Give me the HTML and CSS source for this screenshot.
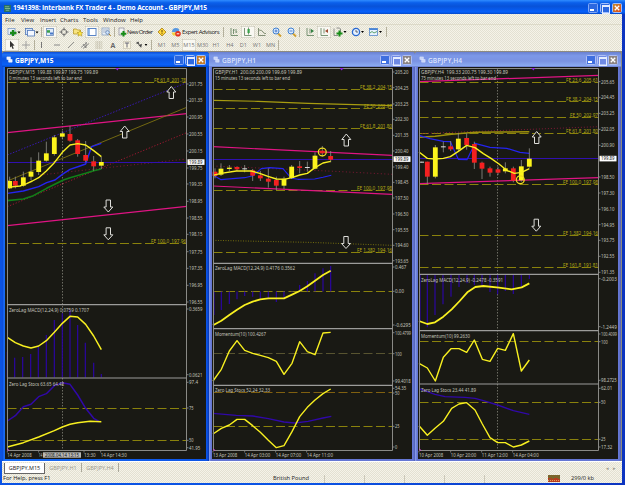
FILE: index.html
```html
<!DOCTYPE html>
<html lang="en">
<head>
<meta charset="utf-8">
<title>Interbank FX Trader 4</title>
<link rel="stylesheet" href="styles.css">
</head>
<body>
<div class="app">
  <header class="titlebar">
    <svg class="logo" viewBox="0 0 8 8"><rect width="8" height="8" fill="#286f62"/><path d="M1 2h5M1 4h6M2 6h4" stroke="#9ed0a0" stroke-width=".8"/></svg>
    <svg class="apptitle" viewBox="0 0 196 12"><text x="0" y="8.4" textLength="194">1941398: Interbank FX Trader 4 - Demo Account - GBPJPY,M15</text></svg>
    <div class="controls"><i class="min"></i><i class="max"></i><i class="close hot"><svg viewBox="0 0 9 9"><path d="M2 2l5 5M7 2l-5 5"/></svg></i></div>
  </header>
  <nav class="menu"><span>File</span><span>View</span><span>Insert</span><span>Charts</span><span>Tools</span><span>Window</span><span>Help</span></nav>
  <div class="bar bar1">
    <b class="w16"><svg viewBox="0 0 16 12"><rect x="2" y="2.5" width="7" height="6" fill="#e8f0fa" stroke="#7090c0" stroke-width=".7"/><path d="M7 4v6M4 7h6.5" stroke="#1c8a1c" stroke-width="2.3"/><path d="M11.5 5.5h3l-1.5 2z"/></svg></b>
    <b class="w18"><svg viewBox="0 0 18 12"><rect x="3.5" y="2.5" width="7" height="6" fill="#d4e4fa" stroke="#5078b8" stroke-width=".8"/><rect x="5.5" y="4.5" width="7" height="5.5" fill="#f4f8ff" stroke="#5078b8" stroke-width=".8"/><path d="M13.5 5.5h3l-1.5 2z"/></svg></b>
    <i class="sep"></i>
    <b class="on"><svg viewBox="0 0 14 12"><rect x="3.5" y="2.5" width="7" height="7" fill="#e0ecfa" stroke="#6888b8" stroke-width=".8"/><path d="M4 4.2h3v2.5H4z" fill="#38a048"/><path d="M7 6.5h3v2H7z" fill="#4878c8"/></svg></b>
    <b><svg viewBox="0 0 14 12"><circle cx="7" cy="6" r="2.7" fill="none" stroke="#666" stroke-width=".8"/><path d="M7 1.5v3M7 7.500v3M2.500 6h3M8.500 6h3" stroke="#666"/></svg></b>
    <b><svg viewBox="0 0 14 12"><path d="M2.500 3h3l1 1h3v4h-7z" fill="#f8e480" stroke="#b09020" stroke-width=".7"/><path d="M9 4.500l1 2h2l-1.600 1.400.6 2.300-2-1.300-2 1.300.6-2.300L6 6.500h2z" fill="#ffe840" stroke="#a88818" stroke-width=".5"/></svg></b>
    <b class="on"><svg viewBox="0 0 14 12"><rect x="3" y="2.500" width="8" height="7" fill="#fff" stroke="#4878c0" stroke-width=".9"/><path d="M4 3v6" stroke="#78a8e8" stroke-width="1.600"/></svg></b>
    <b><svg viewBox="0 0 14 12"><rect x="3" y="2" width="7" height="7" fill="#e8f0f8" stroke="#7c94b8" stroke-width=".7"/><path d="M4 4h5M4 6h3" stroke="#8c9cb4" stroke-width=".7"/><circle cx="8.500" cy="6.500" r="1.800" fill="#cfe4ff" stroke="#5878a8" stroke-width=".7"/><path d="M9.800 7.800l2 2" stroke="#b08020"/></svg></b>
    <i class="sep wide"></i>
    <b class="order"><svg viewBox="0 0 9 12"><rect x="1" y="2" width="5" height="7" fill="#f4f4f4" stroke="#889" stroke-width=".7"/><path d="M5.500 5v5.500M2.800 7.700h5.500" stroke="#168c16" stroke-width="2"/></svg><svg class="lbl" viewBox="0 0 27 12"><text x="0" y="8.200" textLength="26">New Order</text></svg></b>
    <b><svg viewBox="0 0 14 12"><path d="M7 2l4 4-4 4-4-4z" fill="#ffd83c" stroke="#a87c10" stroke-width=".8"/><path d="M7 4v2.500M7 7.200v1" stroke="#604000"/></svg></b>
    <b class="expert"><svg viewBox="0 0 13 12"><path d="M3 6q0-4 4-4t3 4z" fill="#5898e0"/><path d="M2.500 6.500h6L7 9.500H4z" fill="#f4d040"/><circle cx="9" cy="7.800" r="2.800" fill="#e03020"/><path d="M7.700 7.800h2.600" stroke="#fff"/></svg><svg class="lbl" viewBox="0 0 40 12"><text x="0" y="8.200" textLength="37.500">Expert Advisors</text></svg></b>
    <i class="sep wide"></i>
    <b><svg viewBox="0 0 14 12"><path d="M4 2v7.500h7M6.500 3v5M6.500 4h1.200M9 3v4M9 6h1.200" fill="none" stroke="#5c7c58" stroke-width=".8"/></svg></b>
    <b class="on"><svg viewBox="0 0 14 12"><path d="M3.500 2v7.500h7M7.500 1.500v7" fill="none" stroke="#5c7c58" stroke-width=".8"/><rect x="6.500" y="3" width="2.200" height="4" fill="#38a048"/></svg></b>
    <b><svg viewBox="0 0 14 12"><path d="M3.500 2v7.500h7M4 4q3 0 4 2t3 1.500" fill="none" stroke="#68785c" stroke-width=".8"/></svg></b>
    <b class="w15"><svg viewBox="0 0 15 12"><path d="M9 7.500l3 3" stroke="#d0a030" stroke-width="1.800"/><circle cx="7" cy="5" r="3" fill="#dcecff" stroke="#4080d0"/><path d="M5.500 5h3M7 3.500v3" stroke="#3068c0" stroke-width=".8"/></svg></b>
    <b><svg viewBox="0 0 14 12"><path d="M9 7.500l3 3" stroke="#d0a030" stroke-width="1.800"/><circle cx="7" cy="5" r="3" fill="#dcecff" stroke="#4080d0"/><path d="M5.500 5h3" stroke="#3068c0" stroke-width=".8"/></svg></b>
    <i class="sep wide"></i>
    <b><svg viewBox="0 0 14 12"><path d="M4 2v7.500h7M7 2.500v5" fill="none" stroke="#5c7c58" stroke-width=".8"/><path d="M8 3l3 2-3 2z" fill="#308040"/></svg></b>
    <b class="on"><svg viewBox="0 0 14 12"><path d="M4 2v7.500h7M7 2.500v5" fill="none" stroke="#5c7c58" stroke-width=".8"/><path d="M11 3v4L8 5z" fill="#a04830"/></svg></b>
    <b class="w18"><svg viewBox="0 0 18 12"><path d="M3 2.500v7h4M5.500 2h3l1 1v5" fill="none" stroke="#777" stroke-width=".8"/><path d="M8.500 4.500v6M5.500 7.500h6" stroke="#168c16" stroke-width="2"/><path d="M12.500 5h3L14 7z"/></svg></b>
    <b class="w18"><svg viewBox="0 0 18 12"><circle cx="7" cy="6" r="3.600" fill="#e4f0ff" stroke="#2868d0" stroke-width="1.300"/><path d="M7 4v2h2" fill="none" stroke="#333" stroke-width=".7"/><path d="M12 5h3l-1.500 2z"/></svg></b>
    <b class="w18"><svg viewBox="0 0 18 12"><rect x="2.500" y="2.500" width="8" height="7" fill="#e8f2ff" stroke="#5888c8" stroke-width=".8"/><path d="M2.500 3.200h8" stroke="#4080d8" stroke-width="1.500"/><path d="M3 7l2-1.500 2 1.500 3-1.500" fill="none" stroke="#389048" stroke-width=".8"/><path d="M12 5h3l-1.500 2z"/></svg></b>
    <i class="sep"></i>
  </div>
  <div class="bar bar2">
    <b class="on"><svg viewBox="0 0 14 12"><path d="M5 1.800l4.600 4.800-2 .1 1.200 2.800-1.200.5-1.200-2.800L5 8.500z" fill="#333"/></svg></b>
    <b><svg viewBox="0 0 14 12"><path d="M7 2v8M3 6h8" stroke="#999" stroke-width=".9"/></svg></b>
    <i class="sep"></i>
    <b><svg viewBox="0 0 14 12"><path d="M5.500 3v6" stroke="#777"/></svg></b>
    <b><svg viewBox="0 0 14 12"><path d="M4 6h6" stroke="#888"/></svg></b>
    <b><svg viewBox="0 0 14 12"><path d="M4 9l6-6" stroke="#888" stroke-width=".9"/></svg></b>
    <b><svg viewBox="0 0 14 12"><path d="M3 8.500l6-5M5 9.500l6-5M5 5l3 4M8 3v6" stroke="#777" stroke-width=".8"/></svg></b>
    <b><svg viewBox="0 0 14 12"><path d="M3.500 3h7M3.500 5h7M3.500 7h7M3.500 9h7" stroke="#a09880" stroke-width=".8" stroke-dasharray="1 .7"/></svg></b>
    <b class="glyph">A</b>
    <b><svg viewBox="0 0 14 12"><rect x="3.500" y="2.500" width="7" height="7" fill="#f8f4e0" stroke="#a09c88" stroke-width=".7" stroke-dasharray="1 1"/><path d="M4.800 4h4.400M7 4v4.500" stroke="#667"/></svg></b>
    <b class="w18"><svg viewBox="0 0 18 12"><path d="M2 4l3-2 1 3zM5 6l4-1-1 4z" fill="#444"/><path d="M3 3l5 5" stroke="#555"/><path d="M12 5h3l-1.500 2z"/></svg></b>
    <i class="sep wide"></i>
    <b class="tf">M1</b><b class="tf">M5</b><b class="tf on">M15</b><b class="tf">M30</b><b class="tf">H1</b><b class="tf">H4</b><b class="tf">D1</b><b class="tf">W1</b><b class="tf">MN</b>
    <i class="sep"></i>
  </div>
  <main class="mdi">
    <section class="win active">
      <div class="wintitle"><svg class="wicon" viewBox="0 0 8 8"><path d="M1 1h4v3H1zM3 4h4v3H3z" fill="#e8f0ff" stroke="#fff" stroke-width=".6"/></svg><svg class="wname" viewBox="0 0 60 12"><text x="0" y="8.600" textLength="38.500">GBPJPY,M15</text></svg><div class="controls"><i class="min"></i><i class="max"></i><i class="close"><svg viewBox="0 0 9 9"><path d="M2 2l5 5M7 2l-5 5"/></svg></i></div></div>
      <svg class="chart" id="m15" viewBox="5 67 201 392"></svg>
    </section>
    <section class="win">
      <div class="wintitle"><svg class="wicon" viewBox="0 0 8 8"><path d="M1 1h4v3H1zM3 4h4v3H3z" fill="#c8d4f8" stroke="#dfe6ff" stroke-width=".6"/></svg><svg class="wname" viewBox="0 0 60 12"><text x="0" y="8.600" textLength="34">GBPJPY,H1</text></svg><div class="controls"><i class="min"></i><i class="max"></i><i class="close"><svg viewBox="0 0 9 9"><path d="M2 2l5 5M7 2l-5 5"/></svg></i></div></div>
      <svg class="chart" id="h1" viewBox="212 67 200 392"></svg>
    </section>
    <section class="win">
      <div class="wintitle"><svg class="wicon" viewBox="0 0 8 8"><path d="M1 1h4v3H1zM3 4h4v3H3z" fill="#c8d4f8" stroke="#dfe6ff" stroke-width=".6"/></svg><svg class="wname" viewBox="0 0 60 12"><text x="0" y="8.600" textLength="34">GBPJPY,H4</text></svg><div class="controls"><i class="min"></i><i class="max"></i><i class="close"><svg viewBox="0 0 9 9"><path d="M2 2l5 5M7 2l-5 5"/></svg></i></div></div>
      <svg class="chart" id="h4" viewBox="418 67 200 392"></svg>
    </section>
  </main>
  <div class="tabs"><span class="tab current">GBPJPY,M15</span><span class="tab">GBPJPY,H1</span><span class="tab">GBPJPY,H4</span><span class="pager">◂&nbsp;&nbsp; ▸</span></div>
  <footer class="status"><span class="help">For Help, press F1</span><span class="profile">British Pound</span><i></i><i></i><i></i><i></i><i></i><span class="conn"><svg viewBox="0 0 12 7"><rect width="12" height="7" fill="#b83c20"/><path d="M1 0v3M3 0v3M5 0v4M7 0v3M9 0v3M11 0v4M2 4v2" stroke="#3c9038"/><path d="M0 5.500h12" stroke="#e89c60" stroke-dasharray="1 1"/></svg></span><span class="traffic">299/0 kb</span></footer>
</div>
<script src="charts.js"></script>
</body>
</html>
```
FILE: styles.css
```css
* { box-sizing: border-box; }
body {
  margin: 0;
  width: 625px;
  height: 485px;
  overflow: hidden;
  font-family: "Open Sans", "Noto Sans", sans-serif;
  font-size: 6px;
  color: #222;
  background: #0a3ccc;
}
svg { display: block; }
i { font-style: normal; }
b { font-weight: normal; }
.app {
  width: 625px;
  height: 485px;
  padding: 0 3px 2px 2px;
  display: flex;
  flex-direction: column;
  background: linear-gradient(90deg, #0b53e4, #0b53e4 50%, #0c34c0);
}
.titlebar {
  height: 14px;
  flex: none;
  margin: 0 -3px 0 -2px;
  padding: 2px 3px 0 4px;
  display: flex;
  align-items: center;
  background: linear-gradient(#2f8cff 0, #0a5fea 20%, #0852d8 45%, #0660fb 85%, #0448c8 100%);
}
.logo { width: 7px; height: 7px; margin-right: 2px; }
.apptitle { width: 196px; height: 12px; }
.apptitle text { font-weight: 700; font-size: 6.600px; fill: #fff; }
.controls { display: flex; gap: 2px; margin-left: auto; }
.controls i {
  width: 10px;
  height: 10px;
  border: 1px solid #a4c0fa;
  border-radius: 1.5px;
  background: #2c68e0;
}
.controls .min { border-color: #7fa8f8; }
.controls .min::after { content: ""; display: block; width: 4px; height: 2px; margin: 5px 0 0 1px; background: #fff; }
.controls .max::after { content: ""; display: block; width: 6px; height: 6px; margin: 1px; border: 1px solid #e4ecff; border-top-width: 2px; }
.controls .close { background: #c47c28; }
.controls .hot { background: linear-gradient(135deg, #c08a30, #e04a18); }
.controls .close svg { width: 8px; height: 8px; }
.controls .close path { stroke: #fff; stroke-width: 1.5; }

.menu, .bar, .tabs, .status {
  background-color: #eeebde;
  background-image: repeating-conic-gradient(#e3e1d2 0 25%, #f5f3e9 0 50%);
  background-size: 2px 2px;
}
.menu {
  height: 11px;
  flex: none;
  display: grid;
  grid-template-columns: 16px 19px 20px 23px 20px 27px 30px;
  padding-left: 3px;
  line-height: 12px;
  border-bottom: 1px solid #dcd9c8;
}
.bar { flex: none; display: flex; align-items: center; padding-left: 4px; }
.bar1 { height: 14px; }
.bar2 { height: 12px; padding-left: 3px; }
.bar b { width: 14px; height: 12px; flex: none; display: flex; align-items: center; justify-content: center; }
.bar b > svg { width: 100%; height: 12px; flex: none; }
.bar .w15 { width: 15px; }
.bar .w16 { width: 16px; }
.bar .w18 { width: 18px; }
.bar b.on { background: #f9f8f2; box-shadow: inset 0 0 0 .5px #bdb9a8; }
.bar b.order { width: 37px; justify-content: flex-start; }
.bar b.order > svg { width: 9px; }
.bar b.order > .lbl { width: 27px; }
.bar b.expert { width: 53px; justify-content: flex-start; }
.bar b.expert > svg { width: 13px; }
.bar b.expert > .lbl { width: 40px; }
.lbl text { font-size: 6px; fill: #222; }
.sep { width: 3px; height: 10px; flex: none; border-left: 1px solid #b4b09c; margin-left: 1px; margin-right: -1px; }
.sep.wide { width: 5px; }
.bar .glyph { font-size: 7px; font-weight: 700; color: #666; }
.bar .tf { width: 13.600px; font-size: 5.500px; color: #777; }
.bar2 .w18 { width: 16px; }

.mdi {
  height: 410px;
  flex: none;
  display: grid;
  grid-template-columns: 207px 206px 206px;
  background: #8d8b80;
  padding-top: 1px;
}
.win { background: linear-gradient(90deg, #8ea4ee, #6375d2 2px, #6577d4 calc(100% - 2px), #5260b4); padding: 0 3px; border-radius: 3px 3px 0 0; }
.win.active { background: linear-gradient(90deg, #0a45d4, #1a6cf4 2px, #0b54e6 calc(100% - 2px), #0834b0); }
.wintitle {
  height: 15px;
  margin: 0 -3px;
  padding: 0 3px 0 4px;
  display: flex;
  align-items: center;
  border-radius: 3px 3px 0 0;
  background: linear-gradient(#6a80d0, #7c98e8 25%, #7a92e2 60%, #8aa8f0 90%, #6878cc);
}
.win.active .wintitle { background: linear-gradient(#0a4cd8, #1f72f6 18%, #0a54e0 45%, #0960f8 85%, #0448c8); }
.wicon { width: 7px; height: 7px; margin-right: 2px; }
.wname { width: 60px; height: 12px; }
.wname text { font-size: 6.600px; font-weight: 600; fill: #dde6ff; }
.active .wname text { fill: #fff; font-weight: 700; }
.win .controls { gap: 1px; }
.win:not(.active) .controls i { background-color: #6f8ae4; border-color: #aebff6; }
.win:not(.active) .controls .min { background-color: #3f6fe0; }
.win:not(.active) .controls .close { background-color: #8b8484; }
.chart { width: 100%; height: 392px; background: #191914; }
.chart text { font-family: "Noto Sans", sans-serif; font-size: 5.200px; fill: #c4c4bc; }
.chart .head { font-size: 4.600px; }
.chart .fe { fill: #b5ab14; }
.chart .boxed { fill: #111; }

.tabs { height: 13px; flex: none; display: flex; padding: 1px 6px 1px 2px; border-top: 1px solid #fff; color: #9b998c; line-height: 10px; }
.tab { width: 37px; text-align: center; border-right: 1px solid #aaa89a; height: 9px; font-size: 5.500px; }
.tab.current { width: 41px; height: 11px; background: #fff; color: #222; border: 1px solid #666; border-top: 0; }
.pager { margin-left: auto; font-size: 5px; }
.status { height: 9px; flex: none; display: flex; align-items: center; line-height: 9px; padding-left: 1px; font-size: 5.700px; }
.help { width: 270px; }
.profile { width: 51px; }
.status i { width: 40px; height: 8px; flex: none; border-left: 1px solid #cbc8b8; }
.status i:last-of-type { width: 63px; }
.conn { width: 24px; padding-left: 1px; }
.conn svg { width: 12px; height: 7px; }
```
FILE: charts.js
```js
// Coordinates are stored in thirds of a pixel, relative to each block's origin.
const YELLOW = '#f8f020', BLUE = '#2424f0', INDIGO = '#3008a8', PINK = '#e01484', OLIVE = '#8a820c', RED = '#c01838';

function Chart(id, ox, left, right) {
  const svg = document.getElementById(id);
  const X = v => +(ox + v / 3).toFixed(2);
  const add = s => svg.insertAdjacentHTML('beforeend', s);
  const api = {
    line(color, oy, pts, w = 1, dash = '') {
      const p = pts.trim().split(/\s+/).map(q => { const [a, b] = q.split(',').map(Number); return X(a) + ',' + (oy + b / 3).toFixed(2); }).join(' ');
      add(`<polyline points="${p}" fill="none" stroke="${color}" stroke-width="${w}" stroke-dasharray="${dash}" stroke-linejoin="round"/>`);
    },
    level(y, color = OLIVE) { add(`<path d="M${left} ${Math.floor(y) + .5}H${right}" stroke="${color}" stroke-dasharray="9 3.500"/>`); },
    price(y) { add(`<path d="M${left} ${Math.floor(y) + .5}H${right}" stroke="#3010b0"/>`); },
    text(s, x, cy, w, cls = '') { add(`<text x="${x}" y="${(cy + 1.9).toFixed(2)}" textLength="${w}" lengthAdjust="spacingAndGlyphs" class="${cls}">${s}</text>`); },
    fe(y, s, w, color) { api.level(y, color); api.text(s, right - w - .5, y - 2.4, w, 'fe'); },
    scale(oy, list) { list.forEach(([v, y]) => { const cy = oy + y / 3; add(`<path d="M${right} ${cy.toFixed(1)}h2" stroke="#999" stroke-width=".8"/>`); api.text(v, right + 2.5, cy, Math.min(v.length * 2.25, 16)); }); },
    tag(y) { add(`<rect x="${right + 1}" y="${y - 2.7}" width="17" height="5.600" fill="#fff"/>`); api.text('199.89', right + 2.5, y, 13.5, 'boxed'); },
    bars(oy, base, list) { list.forEach(([x, y]) => { const a = oy + y / 3; add(`<path d="M${X(x)} ${base}V${a.toFixed(1)}" stroke="#2a06a0" stroke-width="1.200"/>`); }); },
    candles(oy, list) {
      list.forEach(([x, h, l, t, b, c]) => {
        const f = { y: '#fcf41c', r: '#f42020', w: '#ddd' }[c];
        add(`<path d="M${X(x)} ${oy + h / 3}V${oy + l / 3}" stroke="#92928a" stroke-width=".8"/><rect x="${X(x) - 2.4}" y="${oy + t / 3}" width="4.800" height="${(b - t) / 3}" fill="${f}"/>`);
      });
    },
    arrow(cx, y, up) {
      const d = up ? 'M0 0L4.500 5.500H2.200V12H-2.200V5.500H-4.500Z' : 'M0 12.500L4.500 7.500H2.200V.5H-2.200V7.500H-4.500Z';
      add(`<path transform="translate(${cx} ${y})" d="${d}" fill="#191914" stroke="#dededa"/>`);
    },
    ring(cx, cy) { add(`<circle cx="${cx}" cy="${cy}" r="3.900" fill="none" stroke="#f0dc20" stroke-width="1.300"/>`); },
    cursor(x) { add(`<path d="M${x} 69V450" stroke="#77776c" stroke-dasharray="1.500 1.500" stroke-width=".9"/>`); },
    frame(seps, mark) {
      add(`<path d="M${left} 450.500V68.500H${right}V450.500Z" fill="none" stroke="#8a8a86"/>`);
      seps.forEach(y => add(`<path d="M${left} ${y}H${right}" stroke="#9c9c9a" stroke-width="1.200"/>`));
      add(`<path d="M${X(mark) - 2} 68h4l-2 2.500z" fill="#9020e0"/><path d="M${left} 448.500l2 2h-2z" fill="#e040e0"/>`);
    },
    times(list) { list.forEach(([s, a, b]) => { add(`<path d="M${X(a)} 451v1.500" stroke="#999" stroke-width=".7"/>`); api.text(s, X(a), 455, (b - a) / 3); }); },
    add
  };
  return api;
}

// ---- GBPJPY,M15 ----
let c = Chart('m15', 0, 7.5, 186.5);
c.cursor(62.5);
c.fe(82.3, 'FE 61.8_201.78', 32);
c.fe(243.3, 'FE 100.0_197.96', 35);
c.line('#3a18c0', 65, '22,270 560,53', .9, '1.500 1.500');
c.line(PINK, 65, '22,203 560,146', 1.2);
c.line('#8a7c10', 65, '22,348 560,127', .8);
c.line(RED, 65, '22,425 560,203', .8, '1.200 1.800');
c.line('#98183c', 65, '120,330 560,282', .8, '1 2.500');
c.line(PINK, 180, '22,137 560,79', 1.2);
c.price(162.3);
c.line('#108018', 65, '22,407 70,402 100,392 140,370 190,345 210,338 257,325 281,317 304,312', 1.6);
c.line(BLUE, 65, '22,385 70,378 116,365 140,353 165,345 187,328 210,313 240,303 257,297 266,270 275,245 304,235', 1.4);
c.candles(65, [[29, 335, 372, 348, 370, 'y'], [46, 335, 370, 348, 362, 'r'], [70, 320, 365, 337, 362, 'y'], [93, 277, 345, 320, 335, 'y'], [116, 262, 330, 287, 321, 'y'], [139, 230, 290, 265, 287, 'y'], [163, 210, 272, 217, 267, 'y'], [187, 198, 222, 205, 215, 'y'], [210, 183, 230, 207, 227, 'r'], [233, 222, 275, 226, 267, 'r'], [257, 228, 292, 270, 287, 'r'], [281, 273, 317, 289, 304, 'r'], [304, 275, 312, 291, 302, 'y']]);
c.line(YELLOW, 65, '22,367 60,363 80,356 97,348 116,338 139,318 163,293 187,262 210,240 233,236 257,240 281,257 304,275', 1.4);
c.arrow(171.3, 86.5, true); c.arrow(124.7, 126, true); c.arrow(108.3, 199.5); c.arrow(108.3, 227.3);
c.text('GBPJPY,M15&#160; 199.88 199.97 199.75 199.89', 9, 72, 89, 'head');
c.text('0 minutes 13 seconds left to bar end', 9, 77.6, 73, 'head');
c.scale(65, [['201.75', 57], ['201.35', 106], ['200.95', 156], ['200.55', 207], ['200.15', 258], ['199.75', 309], ['199.35', 357]]);
c.scale(180, [['198.95', 64], ['198.55', 114], ['198.15', 163], ['197.75', 215], ['197.35', 265], ['196.95', 316], ['196.55', 366]]);
c.tag(162);
c.bars(300, 377.5, [[22, 155], [44, 173], [68, 171], [92, 162], [115, 140], [139, 105], [163, 60], [187, 40], [210, 30], [233, 75], [256, 128], [281, 188], [304, 222]]);
c.line(YELLOW, 300, '22,112 46,128 70,138 93,144 116,138 139,122 163,97 187,70 210,49 233,51 257,73 281,108 304,149', 1.5);
c.text('ZeroLag MACD(12,24,9) 0.0759 0.1707', 9, 310.5, 80);
c.scale(300, [['0.3659', 27], ['0.0621', 224], ['97.4', 247], ['75', 324], ['50', 421], ['41.95', 443]]);
c.level(408); c.level(440.3);
c.line(INDIGO, 300, '22,363 46,347 70,320 93,313 116,290 139,281 163,257 187,248 210,253 233,285 257,325 281,355 297,364', 1.5);
c.line(YELLOW, 300, '22,441 70,428 116,411 163,392 187,381 210,373 233,368 270,364 304,365', 1.5);
c.text('Zero Lag Stocs 63.65 64.48', 9, 384, 55);
c.frame([304.7, 378], 352);
c.times([['14 Apr 2008', 22, 95], ['14', 116, 127], ['13:30', 252, 287], ['14 Apr 14:30', 302, 380]]);
c.add('<rect x="43" y="452.300" width="38" height="5.400" fill="#b8b8b4"/>');
c.text('2008.04.14 13:15', 45, 455, 34, 'boxed');

// ---- GBPJPY,H1 ----
c = Chart('h1', 208, 213.5, 392.5);
c.fe(89.3, 'FE 38.2_204.15', 32); c.fe(108.3, 'FE 50_202.97', 28); c.fe(128.3, 'FE 61.8_201.80', 32);
c.fe(190.3, 'FE 100.0_197.98', 35); c.fe(252.3, 'FE 1.382_194.16', 35);
c.line('#a89c10', 65, '15,106 150,109 300,115 553,122', 1.1);
c.line(PINK, 65, '15,245 553,271', 1.2);
c.line(PINK, 185, '15,3 553,28', 1.2);
c.line('#98183c', 65, '15,303 380,319 553,328', .8, '1 2.500');
c.line('#8a820c', 185, '15,166 300,172 553,181', .8, '1 1.500');
c.price(159.3);
c.line(BLUE, 65, '15,330 39,344 110,338 135,332 160,311 185,308 225,311 250,340 270,343 320,342 345,337 370,331', 1.1);
c.candles(65, [[21, 310, 340, 320, 333, 'r'], [39, 295, 333, 311, 329, 'y'], [64, 300, 318, 308, 312, 'y'], [87, 304, 318, 306, 313, 'r'], [110, 300, 322, 310, 313, 'w'], [134, 312, 348, 316, 332, 'r'], [157, 318, 348, 331, 340, 'r'], [181, 310, 368, 341, 350, 'r'], [205, 335, 375, 345, 362, 'r'], [228, 335, 372, 341, 362, 'y'], [251, 300, 342, 305, 339, 'y'], [275, 288, 325, 304, 309, 'r'], [298, 290, 320, 306, 309, 'w'], [321, 262, 313, 272, 311, 'y'], [343, 243, 275, 257, 265, 'r'], [368, 258, 292, 273, 284, 'r']]);
c.line(YELLOW, 65, '15,331 39,325 85,318 130,318 155,325 180,334 205,342 228,343 252,338 275,330 298,325 321,308 345,294 368,289', 1.4);
c.ring(322.3, 152);
c.arrow(346.3, 134, true); c.arrow(346, 236);
c.text('GBPJPY,H1&#160; 200.06 200.09 199.69 199.89', 215, 72, 87, 'head');
c.text('15 minutes 13 seconds left to bar end', 215, 77.6, 75, 'head');
c.scale(65, [['205.20', 21], ['204.25', 68], ['203.25', 117], ['202.30', 163], ['201.35', 211], ['200.40', 258], ['199.40', 306], ['198.45', 352]]);
c.scale(185, [['197.50', 39], ['196.50', 87], ['195.55', 134], ['194.60', 181], ['193.65', 227], ['0.467', 246], ['0.00', 319]]);
c.tag(159);
c.level(291.3);
c.bars(185, 291.5, [[18, 390], [40, 375], [64, 357], [87, 343], [110, 333], [134, 335], [157, 341], [181, 343], [205, 351], [228, 343], [252, 322], [275, 300], [298, 288], [321, 265], [345, 250], [368, 243]]);
c.line(YELLOW, 185, '15,421 40,407 64,390 87,374 110,360 134,350 157,343 181,340 228,340 252,329 275,318 298,304 321,287 345,270 368,257', 1.8);
c.text('ZeroLag MACD(12,24,9) 0.4176 0.3562', 215, 267.7, 80);
c.level(353.7, '#585430');
c.line(YELLOW, 300, '15,243 40,208 64,153 87,122 110,151 134,160 157,166 181,173 205,184 228,223 252,190 275,125 298,155 321,164 345,99 368,97', 1.4);
c.text('Momentum(10) 100.4267', 215, 334, 51);
c.level(392.3, '#806010'); c.level(426.3);
c.line(INDIGO, 300, '15,340 85,346 134,348 181,356 228,366 260,369 300,364 345,354 370,349', 1.4);
c.line(YELLOW, 300, '15,402 40,385 64,375 87,358 110,358 134,377 157,397 181,421 205,443 228,437 252,395 275,350 298,322 321,300 345,281 368,267', 1.4);
c.text('Zero Lag Stocs 52.24 32.33', 215, 390, 55);
c.scale(300, [['-0.6295', 75], ['100.4799', 98], ['100', 161], ['99.4018', 243], ['54.35', 265], ['50', 279], ['25', 379], ['0', 441]]);
c.frame([263.3, 328.7, 385.3], 401);
c.times([['13 Apr 2008', 15, 88], ['14 Apr 03:00', 110, 187], ['14 Apr 07:00', 203, 280], ['14 Apr 11:00', 296, 375]]);

// ---- GBPJPY,H4 ----
c = Chart('h4', 415, 419.5, 598.5);
c.cursor(497.5);
c.line(PINK, 65, '12,50 551,31', 1.3);
c.fe(82.3, 'FE 23.6_205.61', 32); c.fe(101.3, 'FE 38.2_204.15', 32); c.fe(117.3, 'FE 50_202.97', 28); c.fe(133.3, 'FE 61.8_201.80', 32);
c.fe(184.3, 'FE 100.0_197.98', 35); c.fe(235.3, 'FE 1.382_194.16', 35); c.fe(267.3, 'FE 161.8_191.81', 35);
c.line('#98183c', 65, '12,206 551,185', .8, '1 2');
c.line(PINK, 65, '12,356 551,338', 1.2);
c.line('#9c900c', 65, '12,217 60,214 110,208 180,202 250,201 343,200', 1.5);
c.price(158.3);
c.line(BLUE, 65, '12,211 45,221 85,229 106,230 130,283 156,284 180,235 225,247 275,250 315,262 343,265', 1.2);
c.candles(65, [[20, 290, 293, 290, 293, 'w'], [37, 290, 357, 290, 335, 'r'], [61, 240, 340, 247, 335, 'y'], [85, 230, 262, 244, 247, 'w'], [107, 228, 258, 244, 253, 'r'], [130, 204, 258, 221, 253, 'y'], [155, 205, 254, 219, 240, 'r'], [178, 230, 312, 237, 293, 'r'], [201, 290, 342, 293, 311, 'r'], [225, 305, 335, 310, 323, 'r'], [249, 305, 330, 313, 323, 'r'], [271, 292, 325, 310, 319, 'y'], [295, 305, 352, 310, 347, 'r'], [319, 285, 350, 304, 346, 'y'], [343, 250, 308, 281, 305, 'y']]);
c.line(YELLOW, 65, '12,261 37,280 60,282 85,280 106,275 130,259 155,241 180,248 205,266 228,280 252,297 275,316 298,325 320,322 343,311', 1.4);
c.ring(520.3, 179.7);
c.arrow(536.7, 131.5, true); c.arrow(536.3, 218.7);
c.text('GBPJPY,H4&#160; 199.33 200.75 199.30 199.89', 421, 72, 87, 'head');
c.text('75 minutes 13 seconds left to bar end', 421, 77.6, 75, 'head');
c.scale(65, [['205.65', 50], ['204.45', 97], ['203.25', 145], ['202.05', 193], ['200.90', 241], ['198.50', 336]]);
c.scale(185, [['197.30', 24], ['196.10', 73], ['194.95', 119], ['193.75', 166], ['192.55', 214], ['191.35', 262], ['-0.2003', 281]]);
c.tag(158.5);
c.bars(185, 275, [[15, 410], [37, 427], [60, 390], [84, 358], [108, 335], [132, 306], [156, 295], [178, 300], [201, 305], [225, 321], [248, 328], [271, 318], [295, 327], [319, 307], [343, 282]]);
c.line(YELLOW, 185, '12,408 37,417 60,412 85,395 110,373 134,348 157,322 181,306 205,303 252,308 290,313 320,307 343,295', 1.8);
c.text('ZeroLag MACD(12,24,9) -0.2478 -0.3591', 421, 280, 82);
c.level(341.3);
c.line(YELLOW, 300, '12,190 37,204 61,243 85,172 108,146 132,146 155,157 178,120 202,178 225,184 248,145 271,151 295,101 319,213 343,180', 1.4);
c.text('Momentum(10) 99.2630', 421, 336, 49);
c.level(402.3); c.level(439.3);
c.line(INDIGO, 300, '12,266 37,275 60,283 90,290 150,292 180,295 205,302 248,315 295,332 343,343', 1.4);
c.line(YELLOW, 300, '12,377 37,406 60,385 85,364 110,325 132,312 155,308 180,330 202,372 225,413 248,428 271,428 295,441 319,435 343,423', 1.4);
c.text('Zero Lag Stocs 23.44 41.89', 421, 389.7, 55);
c.scale(300, [['-1.2449', 80], ['100.4099', 102], ['100', 125], ['98.2725', 241], ['62.01', 265], ['50', 307], ['25', 418], ['17.32', 441]]);
c.frame([274.3, 330.7, 384], 355);
c.times([['10 Apr 2008', 12, 85], ['10 Apr 20:00', 107, 184], ['11 Apr 12:00', 200, 278], ['14 Apr 04:00', 293, 371]]);
```
